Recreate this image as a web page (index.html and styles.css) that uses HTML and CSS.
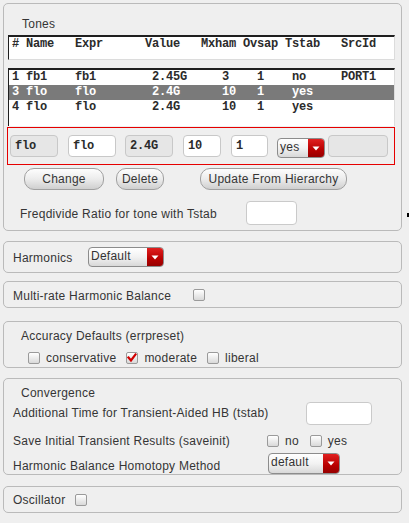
FILE: index.html
```html
<!DOCTYPE html>
<html>
<head>
<meta charset="utf-8">
<title>HB Options</title>
<link rel="stylesheet" href="styles.css">
</head>
<body>
<div class="page">
  <section class="panel tones">
    <div class="title">Tones</div>
    <div class="tbl-head">
      <pre class="mono">#&nbsp;Name   Expr      Value   Mxham Ovsap Tstab   SrcId</pre>
    </div>
    <div class="tbl-list">
      <pre class="mono row">1 fb1    fb1        2.45G     3    1    no     PORT1</pre>
      <pre class="mono row sel">3 flo    flo        2.4G      10   1    yes</pre>
      <pre class="mono row">4 flo    flo        2.4G      10   1    yes</pre>
    </div>
    <div class="editbox">
      <div class="fld ro w48">flo</div>
      <div class="fld w48">flo</div>
      <div class="fld ro w48">2.4G</div>
      <div class="fld w38">10</div>
      <div class="fld w37">1</div>
      <div class="select w48 sel-edit"><span class="sel-text">yes</span><span class="sel-arrow"><svg width="8" height="5" viewBox="0 0 8 5"><path d="M0.5 0.5 H7.5 L4 4.5 Z" fill="#fff"/></svg></span></div>
      <div class="fld ro w60"></div>
    </div>
    <div class="btns">
      <button class="btn btn-change">Change</button>
      <button class="btn btn-delete">Delete</button>
      <button class="btn btn-update">Update From Hierarchy</button>
    </div>
    <div class="freq">
      <span class="lbl lbl-freq">Freqdivide Ratio for tone with Tstab</span>
      <span class="inp inp-freq"></span>
    </div>
  </section>

  <section class="panel line-panel harm">
    <span class="lbl lbl-harm">Harmonics</span>
    <div class="select w76 sel-harm"><span class="sel-text">Default</span><span class="sel-arrow"><svg width="8" height="5" viewBox="0 0 8 5"><path d="M0.5 0.5 H7.5 L4 4.5 Z" fill="#fff"/></svg></span></div>
  </section>

  <section class="panel line-panel multi">
    <span class="lbl lbl-multi">Multi-rate Harmonic Balance</span>
    <span class="cb"></span>
  </section>

  <section class="panel acc">
    <div class="sub-title">Accuracy Defaults (errpreset)</div>
    <div class="cb-row">
      <span class="cb"></span><span class="cb-lbl">conservative</span>
      <span class="cb checked"><svg width="10" height="10" viewBox="0 0 10 10"><path d="M1.5 4.5 L4 7.5 L8.5 1.5" stroke="#d00000" stroke-width="2.2" fill="none" stroke-linecap="square"/></svg></span><span class="cb-lbl">moderate</span>
      <span class="cb"></span><span class="cb-lbl">liberal</span>
    </div>
  </section>

  <section class="panel conv">
    <div class="sub-title">Convergence</div>
    <div class="conv-row r-tstab">
      <span class="lbl lbl-conv">Additional Time for Transient-Aided HB (tstab)</span>
      <span class="inp inp-tstab"></span>
    </div>
    <div class="conv-row r-save">
      <span class="lbl lbl-save">Save Initial Transient Results (saveinit)</span>
      <span class="cb"></span><span class="cb-lbl">no</span>
      <span class="cb"></span><span class="cb-lbl">yes</span>
    </div>
    <div class="conv-row r-homo">
      <span class="lbl lbl-homo">Harmonic Balance Homotopy Method</span>
      <div class="select w72"><span class="sel-text">default</span><span class="sel-arrow"><svg width="8" height="5" viewBox="0 0 8 5"><path d="M0.5 0.5 H7.5 L4 4.5 Z" fill="#fff"/></svg></span></div>
    </div>
  </section>

  <section class="panel line-panel osc">
    <span class="lbl lbl-osc">Oscillator</span>
    <span class="cb"></span>
  </section>
</div>
<span class="edge-mark"></span>
</body>
</html>
```
FILE: styles.css
```css
* { box-sizing: border-box; }
html, body { margin: 0; padding: 0; }
body {
  background: #efefef;
  font-family: "Liberation Sans", Arial, sans-serif;
  font-size: 12px;
  letter-spacing: 0.25px;
  color: #353535;
  width: 409px;
  height: 523px;
  overflow: hidden;
  position: relative;
}
.page { padding: 3px 0 0 3px; }
.panel {
  width: 399px;
  border: 1px solid #bababa;
  border-radius: 5px;
}
/* Tones */
.tones { height: 228px; }
.title { height: 31px; padding: 13px 0 4px 18px; line-height: 14px; }
.mono {
  font-family: "Liberation Mono", "Courier New", monospace;
  font-weight: bold;
  font-size: 12px;
  letter-spacing: -0.2px;
  white-space: pre;
  margin: 0;
  color: #2b2b2b;
}
.tbl-head {
  margin: 0 6px 0 4px;
  height: 25px;
  background: #fff;
  border-top: 2px solid #1f1f1f;
  border-left: 1px solid #1f1f1f;
  border-right: 1px solid #dcdcdc;
  border-bottom: 1px solid #dcdcdc;
  padding-left: 3px;
}
.tbl-head .mono { line-height: 15px; }
.tbl-list {
  margin: 8px 6px 0 4px;
  height: 58px;
  background: #fff;
  border-top: 2px solid #1f1f1f;
  border-left: 1px solid #1f1f1f;
  border-right: 1px solid #dcdcdc;
}
.row { height: 15px; line-height: 15px; padding-left: 3px; }
.row.sel { background: #7a7a7a; color: #fff; }
.editbox {
  margin: 1px 6px 0 3px;
  height: 38px;
  border: 1px solid #e60000;
  padding: 7px 0 0 2px;
  display: grid;
  grid-template-columns: 58px 57px 58px 48px 46px 51px 60px;
  align-items: start;
}
.fld {
  height: 22px;
  border: 1px solid #c8c8c8;
  border-radius: 4px;
  background: #fff;
  padding-left: 4px;
  line-height: 20px;
  font-family: "Liberation Mono", "Courier New", monospace;
  font-weight: bold;
  font-size: 12px;
  letter-spacing: -0.2px;
  color: #2b2b2b;
}
.fld.ro { background: #e6e6e6; }
.w37 { width: 37px; }
.w38 { width: 38px; }
.w48 { width: 48px; }
.w60 { width: 60px; }
.w72 { width: 72px; }
.w76 { width: 76px; }

.select {
  height: 20px;
  display: flex;
  border: 1px solid #8c8c8c;
  border-radius: 4px;
  overflow: hidden;
  background: linear-gradient(#ffffff, #f2f2f2 50%, #d8d8d8);
}
.sel-edit { margin-top: 3px; }
.sel-text { flex: 1; padding-left: 2px; line-height: 16px; color: #333; }
.sel-arrow {
  width: 16px;
  display: flex;
  align-items: center;
  justify-content: center;
  background: linear-gradient(#e02020, #b80000 60%, #960000);
}

.btns {
  margin-top: 3px;
  height: 22px;
  padding-left: 20px;
  display: grid;
  grid-template-columns: 92px 84px auto;
}
.btn {
  height: 22px;
  padding: 0;
  border: 1px solid #a0a0a0;
  border-radius: 10px;
  background: linear-gradient(#fdfdfd, #ececec 50%, #cfcfcf);
  font-family: inherit;
  font-size: 12px;
  letter-spacing: 0.25px;
  color: #353535;
  line-height: 19px;
}
.btn-change { width: 80px; }
.btn-delete { width: 48px; }
.btn-update { width: 147px; }
.freq {
  margin-top: 11px;
  height: 24px;
  padding-left: 16px;
  display: flex;
  align-items: center;
}
.lbl-freq { width: 226px; padding-top: 1px; }
.inp {
  display: block;
  height: 24px;
  border: 1px solid #cacaca;
  border-radius: 4px;
  background: #fff;
}
.inp-freq { width: 51px; }

/* single-line panels */
.line-panel { display: flex; align-items: center; padding-left: 9px; }
.harm { margin-top: 10px; height: 32px; }
.lbl-harm { width: 75px; padding-top: 2px; }
.multi { margin-top: 8px; height: 27px; }
.lbl-multi { width: 180px; padding-top: 2px; }
.osc { margin-top: 11px; height: 27px; }
.lbl-osc { width: 62px; padding-top: 1px; }

.cb {
  width: 12px;
  height: 12px;
  border: 1px solid #9a9a9a;
  border-radius: 2px;
  background: linear-gradient(#ffffff, #d9d9d9);
  display: inline-flex;
  align-items: center;
  justify-content: center;
  flex: none;
}
.cb-lbl { margin: 0 10px 0 6px; }

/* Accuracy */
.acc { margin-top: 13px; height: 47px; }
.sub-title { padding: 7px 0 0 17px; line-height: 14px; height: 21px; }
.cb-row {
  margin-top: 8px;
  height: 14px;
  padding-left: 24px;
  display: flex;
  align-items: center;
}

/* Convergence */
.conv { margin-top: 10px; height: 97px; }
.conv-row { display: flex; align-items: center; padding-left: 9px; }
.r-tstab { margin-top: 1px; height: 24px; }
.lbl-conv { width: 293px; }
.inp-tstab { width: 66px; height: 23px; }
.r-save { margin-top: 6px; height: 20px; }
.lbl-save { width: 254px; }
.r-save .cb-lbl { margin-right: 11px; }
.r-homo { margin-top: 2px; height: 21px; align-items: flex-start; }
.lbl-homo { width: 255px; padding-top: 6px; }
.r-homo .select { height: 21px; }

.edge-mark {
  position: absolute;
  left: 407px;
  top: 213px;
  width: 2px;
  height: 4px;
  background: #000;
}
```
